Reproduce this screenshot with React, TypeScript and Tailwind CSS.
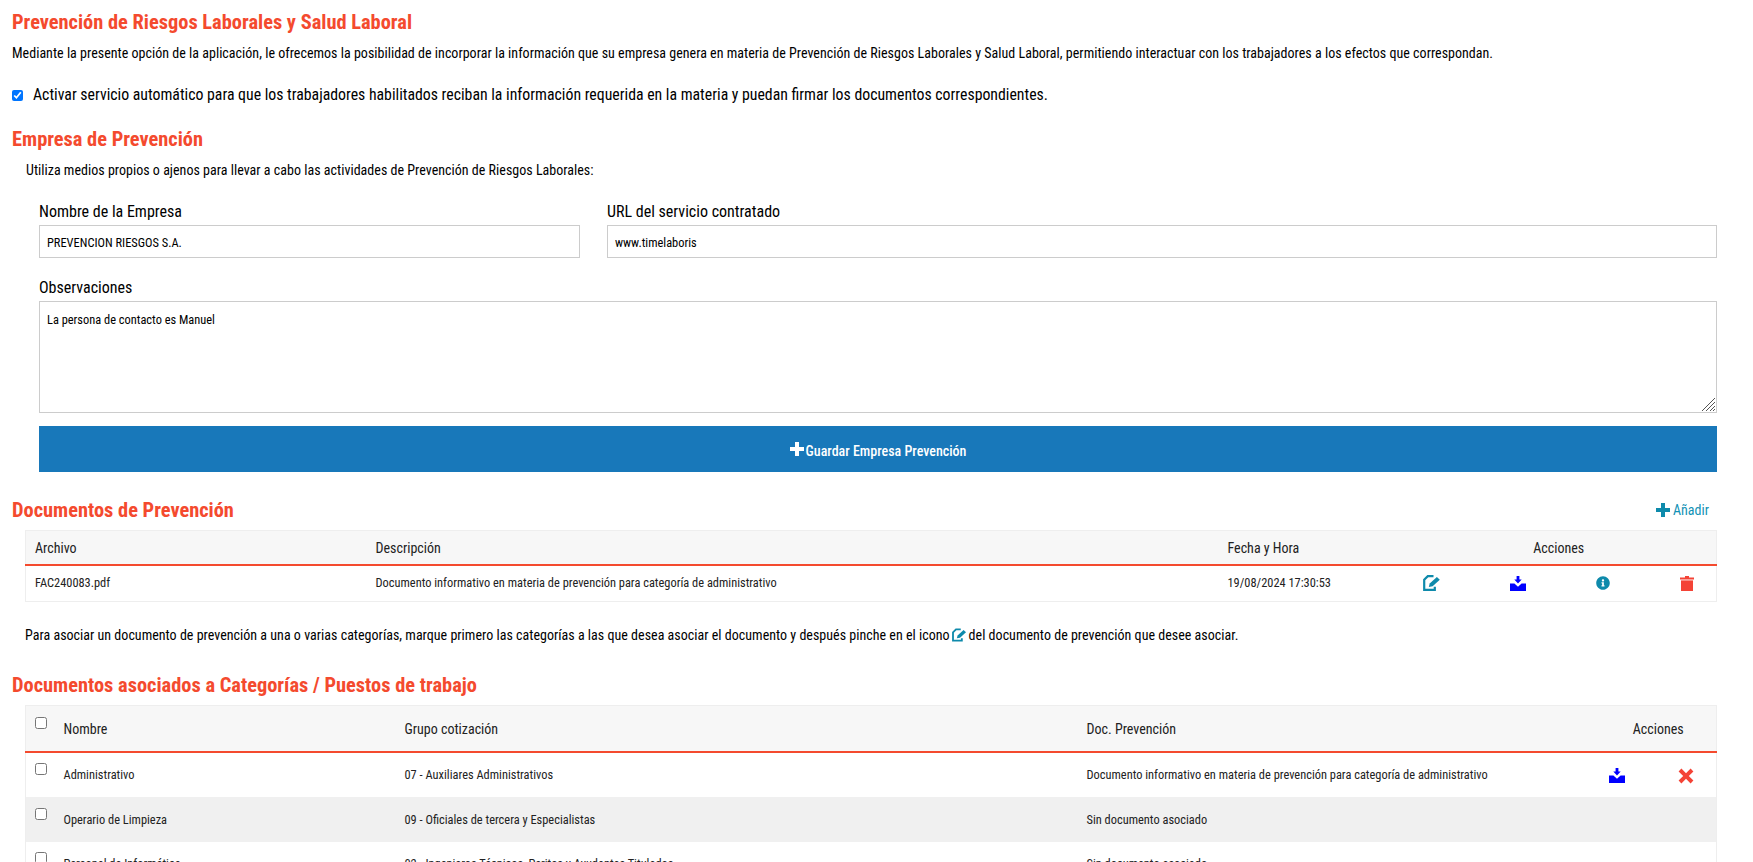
import { FaInfoCircle } from 'react-icons/fa';

const font = { fontFamily: '"Roboto", "Liberation Sans", sans-serif' };

function PlusIcon({ className }: { className: string }) {
  return (
    <svg viewBox="0 0 14 14" className={className} fill="currentColor">
      <path d="M5 0h4v5h5v4H9v5H5V9H0V5h5z" />
    </svg>
  );
}

function EditIcon({ className = 'w-[18px] h-[16px]' }: { className?: string }) {
  return (
    <svg viewBox="0 0 18 16" className={`${className} shrink-0`} fill="none">
      <path d="M10.5 1.2H4.8L1.2 4.8v10h10.6v-3" stroke="#0e8aab" strokeWidth="2.2" />
      <path d="M5.8 12l.9-3.4 7.2-6.6 2.9 2.8-7.2 6.4z" fill="#0e8aab" />
    </svg>
  );
}

function DownloadIcon() {
  return (
    <svg viewBox="0 0 16 15" className="w-[16px] h-[15px]" fill="#0000ff">
      <path d="M6.6 0h2.8v3.6h2.3L8 7.4 4.3 3.6h2.3z" />
      <path d="M0 7.5h4.4L8 10.8l3.6-3.3H16V15H0z" />
    </svg>
  );
}

function TrashIcon() {
  return (
    <svg viewBox="0 0 14 15" className="w-[14px] h-[15px]" fill="#f44336">
      <path d="M5 0h4v1.4h5v2H0v-2h5z" />
      <path d="M1 4.4h12V15H1z" />
    </svg>
  );
}

function CloseIcon() {
  return (
    <svg viewBox="0 0 16 16" className="w-[16px] h-[16px]" fill="#f44336">
      <path d="M3.4.6L8 5.2 12.6.6l2.8 2.8L10.8 8l4.6 4.6-2.8 2.8L8 10.8l-4.6 4.6-2.8-2.8L5.2 8 .6 3.4z" />
    </svg>
  );
}

const headingCls = 'text-[20.4px] font-bold text-[#f44a2e] leading-6';
const thCls = 'text-left font-normal text-[14px] text-[#222] px-[9px] pt-[2px]';
const tdCls = 'text-[12.4px] text-[#222] px-[9px]';
const td2Cls = 'text-[12.4px] text-[#222] px-[9px] pt-[2px]';
const labelCls = 'text-[16px] leading-5';
const fieldCls = 'text-[12.4px] border border-[#ccc] px-[7px] outline-none';
const paraCls = 'text-[14px] leading-5 tracking-[0.02px]';
const boxCls = 'w-[12px] h-[12px] block mb-[11px]';

export default function App() {
  return (
    <div style={font} className="h-screen overflow-hidden bg-white text-black [font-stretch:condensed]">
      <div className="pl-[12px] pr-[36px] pt-[10px]">
        <h1 className={headingCls}>Prevención de Riesgos Laborales y Salud Laboral</h1>
        <p className={`mt-[9px] ${paraCls}`}>
          Mediante la presente opción de la aplicación, le ofrecemos la posibilidad de incorporar la información que su empresa genera en materia de Prevención de Riesgos Laborales y Salud Laboral, permitiendo interactuar con los trabajadores a los efectos que correspondan.
        </p>
        <label className="mt-[22px] flex items-center gap-[10px] text-[15.8px] leading-5">
          <input type="checkbox" defaultChecked className="w-[11px] h-[11px] accent-[#0075ff]" />
          Activar servicio automático para que los trabajadores habilitados reciban la información requerida en la materia y puedan firmar los documentos correspondientes.
        </label>

        <h2 className={`${headingCls} mt-[22px]`}>Empresa de Prevención</h2>
        <p className={`mt-[9px] ml-[14px] ${paraCls}`}>
          Utiliza medios propios o ajenos para llevar a cabo las actividades de Prevención de Riesgos Laborales:
        </p>

        <div className="ml-[27px] mt-[22px]">
          <div className="flex gap-[27px]">
            <div className="w-[541px]">
              <div className={`${labelCls} mb-[3px]`}>Nombre de la Empresa</div>
              <input readOnly value="PREVENCION RIESGOS S.A." className={`w-full h-[33px] pt-[2px] ${fieldCls}`} />
            </div>
            <div className="flex-1">
              <div className={`${labelCls} mb-[3px]`}>URL del servicio contratado</div>
              <input readOnly value="www.timelaboris" className={`w-full h-[33px] pt-[2px] ${fieldCls}`} />
            </div>
          </div>
          <div className={`${labelCls} mt-[20px] mb-[3px]`}>Observaciones</div>
          <div className="relative">
            <textarea readOnly value="La persona de contacto es Manuel" className={`block w-full h-[112px] py-[9px] resize-none ${fieldCls}`} />
            <svg viewBox="0 0 15 15" className="absolute right-[1px] bottom-[1px] w-[15px] h-[15px]" stroke="#555" strokeWidth="1" fill="none">
              <path d="M1 14L14 1M5 14L14 5M9 14l5-5M12 14l2-2" />
            </svg>
          </div>
          <button className="mt-[13px] w-full h-[46px] bg-[#1878ba] text-white text-[14px] font-medium pt-[4px] flex items-center justify-center gap-[2px]">
            <PlusIcon className="w-[14px] h-[14px] -mt-[4px]" />
            Guardar Empresa Prevención
          </button>
        </div>

        <div className="mt-[26px] flex items-center justify-between">
          <h2 className={headingCls}>Documentos de Prevención</h2>
          <a className="mr-[8px] flex items-center gap-[3px] text-[14px] text-[#1191b5]">
            <PlusIcon className="w-[14px] h-[14px] text-[#0e8aab]" />
            Añadir
          </a>
        </div>

        <table className="mt-[8px] ml-[13px] w-[1692px] table-fixed border-collapse border border-[#eee]">
          <thead>
            <tr className="h-[34px] bg-[#f7f7f7] border-b-2 border-[#f44a2e]">
              <th className={`${thCls} w-[341px]`}>Archivo</th>
              <th className={`${thCls} w-[852px]`}>Descripción</th>
              <th className={`${thCls} w-[183px]`}>Fecha y Hora</th>
              <th className="font-normal text-[14px] text-[#222] text-center pt-[2px]">Acciones</th>
            </tr>
          </thead>
          <tbody>
            <tr className="h-[37px]">
              <td className={tdCls}>FAC240083.pdf</td>
              <td className={tdCls}>Documento informativo en materia de prevención para categoría de administrativo</td>
              <td className={tdCls}>19/08/2024 17:30:53</td>
              <td className="pl-[21px] pr-[22px]">
                <div className="flex items-center justify-between">
                  <EditIcon />
                  <DownloadIcon />
                  <FaInfoCircle className="w-[14px] h-[14px] text-[#0e8aab]" />
                  <TrashIcon />
                </div>
              </td>
            </tr>
          </tbody>
        </table>

        <p className={`mt-[23px] ml-[13px] ${paraCls} flex items-center gap-[2px]`}>
          Para asociar un documento de prevención a una o varias categorías, marque primero las categorías a las que desea asociar el documento y después pinche en el icono
          <EditIcon className="w-[15px] h-[14px]" />
          del documento de prevención que desee asociar.
        </p>

        <h2 className={`${headingCls} mt-[28px]`}>Documentos asociados a Categorías / Puestos de trabajo</h2>

        <table className="mt-[8px] ml-[13px] w-[1692px] table-fixed border-collapse border border-[#eee]">
          <thead>
            <tr className="h-[46px] bg-[#f7f7f7] border-b-2 border-[#f44a2e]">
              <th className="w-[29px] pl-[9px] text-left">
                <input type="checkbox" className={boxCls} />
              </th>
              <th className={`${thCls} w-[341px]`}>Nombre</th>
              <th className={`${thCls} w-[682px]`}>Grupo cotización</th>
              <th className={`${thCls} w-[523px]`}>Doc. Prevención</th>
              <th className="font-normal text-[14px] text-[#222] text-center pt-[2px]">Acciones</th>
            </tr>
          </thead>
          <tbody>
            <tr className="h-[45px]">
              <td className="pl-[9px]">
                <input type="checkbox" className={boxCls} />
              </td>
              <td className={td2Cls}>Administrativo</td>
              <td className={td2Cls}>07 - Auxiliares Administrativos</td>
              <td className={td2Cls}>Documento informativo en materia de prevención para categoría de administrativo</td>
              <td className="pl-[8px] pr-[22px] pt-[2px]">
                <div className="flex items-center justify-between">
                  <DownloadIcon />
                  <CloseIcon />
                </div>
              </td>
            </tr>
            <tr className="h-[45px] bg-[#f0f0f0]">
              <td className="pl-[9px]">
                <input type="checkbox" className={boxCls} />
              </td>
              <td className={td2Cls}>Operario de Limpieza</td>
              <td className={td2Cls}>09 - Oficiales de tercera y Especialistas</td>
              <td className={td2Cls}>Sin documento asociado</td>
              <td />
            </tr>
            <tr className="h-[45px]">
              <td className="pl-[9px]">
                <input type="checkbox" className={boxCls} />
              </td>
              <td className={td2Cls}>Personal de Informática</td>
              <td className={td2Cls}>02 - Ingenieros Técnicos, Peritos y Ayudantes Titulados</td>
              <td className={td2Cls}>Sin documento asociado</td>
              <td />
            </tr>
          </tbody>
        </table>
      </div>
    </div>
  );
}
